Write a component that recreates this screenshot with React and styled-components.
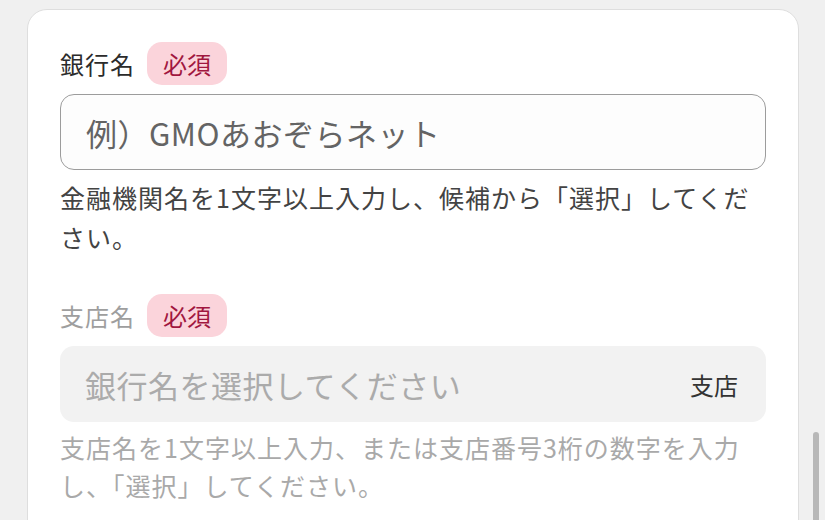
import React from "react";
import styled, { createGlobalStyle } from "styled-components";

const GlobalStyle = createGlobalStyle`
  html, body {
    margin: 0;
    padding: 0;
    background: #f0f0f0;
    overflow: hidden;
    font-family: "Noto Sans CJK JP", "Noto Sans", sans-serif;
  }
`;

const Page = styled.div`
  position: relative;
  height: 520px;
  padding-top: 9px;
  box-sizing: border-box;
`;

const Card = styled.div`
  margin-left: 27px;
  width: 772px;
  min-height: 560px;
  box-sizing: border-box;
  background: #fff;
  border: 1px solid #dedede;
  border-radius: 20px;
  padding: 32px 32px 0;
`;

const Field = styled.div`
  margin-bottom: ${(p) => p.gap || 0}px;
`;

const LabelRow = styled.div`
  display: flex;
  align-items: center;
  gap: 12px;
  margin-bottom: 9px;
`;

const Label = styled.span`
  font-size: 24px;
  letter-spacing: 1px;
  color: ${(p) => (p.disabled ? "#9e9e9e" : "#2b2b2b")};
`;

const Badge = styled.span`
  display: inline-flex;
  align-items: center;
  height: 43px;
  padding: 0 16px;
  border-radius: 15px;
  background: #fbd4db;
  color: #a1173f;
  font-size: 24px;
`;

const InputBox = styled.div`
  display: flex;
  align-items: center;
  justify-content: space-between;
  height: 76px;
  box-sizing: border-box;
  padding: 0 28px 0 25px;
  border-radius: 14px;
  border: ${(p) => (p.disabled ? "none" : "1px solid #9c9c9c")};
  background: ${(p) => (p.disabled ? "#f2f2f2" : "#fdfdfd")};
`;

const Placeholder = styled.span`
  font-size: 31px;
  letter-spacing: 0.5px;
  color: ${(p) => (p.disabled ? "#ababab" : "#646464")};
`;

const Suffix = styled.span`
  font-size: 24px;
  color: #333;
`;

const Help = styled.p`
  margin: ${(p) => (p.disabled ? "6px" : "7px")} 0 0;
  max-width: 700px;
  font-size: 25px;
  letter-spacing: 1px;
  line-height: ${(p) => (p.disabled ? "38px" : "40px")};
  color: ${(p) => (p.disabled ? "#a9a9a9" : "#434343")};
`;

const ScrollThumb = styled.div`
  position: absolute;
  left: 813px;
  top: 432px;
  width: 6px;
  height: 100px;
  border-radius: 3px;
  background: #b8b8b8;
`;

export default function App() {
  return (
    <>
      <GlobalStyle />
      <Page>
        <Card>
          <Field gap={37}>
            <LabelRow>
              <Label>銀行名</Label>
              <Badge>必須</Badge>
            </LabelRow>
            <InputBox>
              <Placeholder>例）GMOあおぞらネット</Placeholder>
            </InputBox>
            <Help>金融機関名を1文字以上入力し、候補から「選択」してください。</Help>
          </Field>
          <Field>
            <LabelRow>
              <Label disabled>支店名</Label>
              <Badge>必須</Badge>
            </LabelRow>
            <InputBox disabled>
              <Placeholder disabled>銀行名を選択してください</Placeholder>
              <Suffix>支店</Suffix>
            </InputBox>
            <Help disabled>
              支店名を1文字以上入力、または支店番号3桁の数字を入力し、「選択」してください。
            </Help>
          </Field>
        </Card>
        <ScrollThumb />
      </Page>
    </>
  );
}
